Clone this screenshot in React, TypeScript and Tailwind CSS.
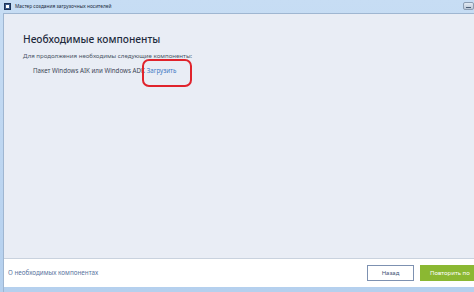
export default function App() {
  return (
    <div
      className="w-[474px] h-[292px] overflow-hidden flex flex-col bg-gradient-to-b from-[#c7ddf4] to-[#b5d0ee]"
      style={{ fontFamily: '"Noto Sans", "Open Sans", sans-serif' }}
    >
      {/* Title bar */}
      <div className="h-[13px] flex items-center pl-[4px] relative">
        <div className="w-[7px] h-[7px] bg-[#3a5a8a] border border-[#1d3358] flex items-end justify-center">
          <div className="w-[3px] h-[3px] bg-white mb-[1px]" />
        </div>
        <span className="ml-[4px] text-[4.8px] leading-none text-[#1c2a3c]">
          Мастер создания загрузочных носителей
        </span>
        <div className="absolute right-0 top-[2px] w-[11px] h-[8px] rounded-[2px] bg-gradient-to-b from-[#e3ebf4] to-[#b9c6d6] border border-[#8c9db2] flex items-end justify-center pb-[1px]">
          <div className="w-[5px] h-[1px] bg-[#4b5d75]" />
        </div>
      </div>

      {/* Window body */}
      <div className="flex-1 flex flex-col ml-[3px] border-l border-t border-[#9fb6d1]">
        <div className="flex-1 bg-[#e9edf5] pl-[19px] pt-[19px] relative">
          <h1 className="text-[10.2px] leading-[13px] text-[#1f2b3d] font-medium">
            Необходимые компоненты
          </h1>
          <p className="mt-[6px] text-[6.1px] leading-[8px] text-[#4a5566]">
            Для продолжения необходимы следующие компоненты:
          </p>
          <div className="mt-[7px] pl-[10px] text-[6.2px] leading-[8px] flex gap-[2px]">
            <span className="text-[#3c4656]">Пакет Windows AIK или Windows ADK</span>
            <span className="text-[#3b78c4]">Загрузить</span>
          </div>
          <div className="absolute left-[138px] top-[45px] w-[50px] h-[28px] border-2 border-[#e0232c] rounded-[7px]" />
        </div>

        {/* Footer */}
        <div className="h-[29px] bg-white border-t border-[#c9d2de] flex items-center pl-[4px]">
          <span className="text-[6.3px] text-[#5a74a0]">О необходимых компонентах</span>
          <div className="ml-auto mr-[-6px] flex gap-[6px] items-center">
            <button className="w-[47px] h-[16px] bg-white border border-[#7d91b1] text-[6px] text-[#3e5274]">
              Назад
            </button>
            <button className="w-[60px] h-[16px] bg-[#8bb832] text-[6px] text-white text-left pl-[10px] whitespace-nowrap overflow-hidden">
              Повторить по
            </button>
          </div>
        </div>
        <div className="h-[5px]" />
      </div>
    </div>
  );
}
